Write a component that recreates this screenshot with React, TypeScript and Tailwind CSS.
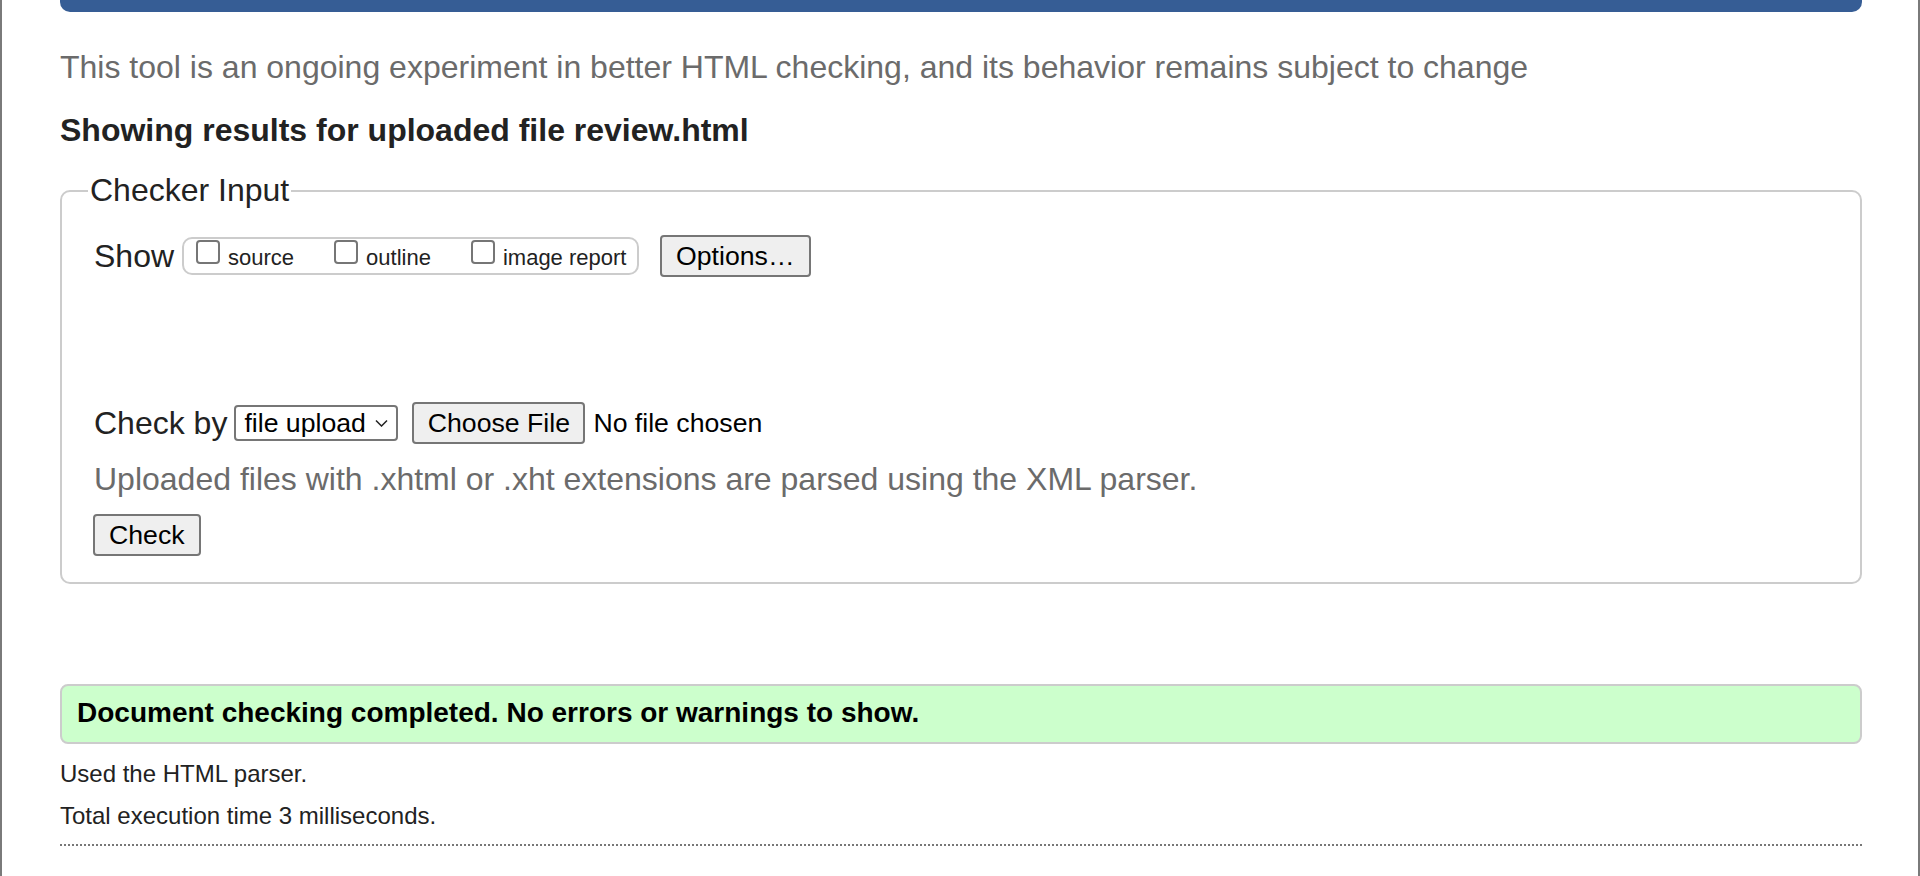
import React from 'react';

function Checkbox({ label }: { label: string }) {
  return (
    <label className="flex items-center gap-[8px]">
      <input
        type="checkbox"
        className="appearance-none w-[24px] h-[24px] rounded-[4px] border-2 border-[#767676] bg-white -translate-y-[4px]"
      />
      <span className="text-[22px] leading-[26px] text-[#222] translate-y-[2px]">{label}</span>
    </label>
  );
}

export default function App() {
  return (
    <div
      className="w-[1920px] min-h-[876px] bg-white border-x-2 border-[#7a7a7a] pl-[58px] pr-[56px] text-[#222]"
      style={{ fontFamily: '"Liberation Sans", Arial, sans-serif' }}
    >
      {/* header bar */}
      <div className="h-[12px] bg-[#365d95] rounded-b-[10px]" />

      <p className="mt-[37px] text-[32px] leading-[37px] text-[#6b6b6b]">
        This tool is an ongoing experiment in better HTML checking, and its behavior remains subject to change
      </p>

      <h2 className="mt-[26px] text-[32px] leading-[37px] font-bold text-[#222]">
        Showing results for uploaded file review.html
      </h2>

      <fieldset className="mt-[23px] border-2 border-[#ccc] rounded-[10px] pl-[32px] pb-[26px]">
        <legend className="ml-[-6px] px-[2px] text-[32px] leading-[37px] text-[#222]">Checker Input</legend>

        {/* show options */}
        <div className="mt-[26px] flex items-center">
          <span className="text-[32px] leading-[37px]">Show</span>
          <div className="ml-[8px] h-[38px] w-[457px] flex items-center gap-[40px] pl-[12px] border-2 border-[#ccc] rounded-[10px]">
            <Checkbox label="source" />
            <Checkbox label="outline" />
            <Checkbox label="image report" />
          </div>
          <button className="ml-[21px] h-[42px] px-[14px] bg-[#efefef] border-2 border-[#767676] rounded-[4px] text-[26.67px] leading-[30px] text-black">
            Options…
          </button>
        </div>

        {/* check by */}
        <div className="mt-[125px] flex items-center">
          <span className="text-[32px] leading-[37px]">Check by</span>
          <div className="relative ml-[7px]">
            <select className="appearance-none h-[36px] w-[164px] pl-[8px] bg-white border-2 border-[#767676] rounded-[4px] text-[26.67px] leading-[30px] text-black">
              <option>file upload</option>
            </select>
            <svg
              className="absolute right-[10px] top-[14px] w-[13px] h-[8px] pointer-events-none"
              viewBox="0 0 13 8"
              fill="none"
              stroke="#222"
              strokeWidth={1.5}
            >
              <path d="M1 1.5l5.5 5.5 5.5-5.5" />
            </svg>
          </div>
          <button className="ml-[14px] h-[42px] w-[173px] bg-[#efefef] border-2 border-[#767676] rounded-[4px] text-[26.67px] leading-[30px] text-black">
            Choose File
          </button>
          <span className="ml-[8px] text-[26.67px] leading-[30px] text-black">No file chosen</span>
        </div>

        <p className="mt-[17px] text-[32px] leading-[37px] text-[#6b6b6b]">
          Uploaded files with .xhtml or .xht extensions are parsed using the XML parser.
        </p>

        <button className="mt-[16px] -ml-[1px] h-[42px] px-[14px] bg-[#efefef] border-2 border-[#767676] rounded-[4px] text-[26.67px] leading-[30px] text-black">
          Check
        </button>
      </fieldset>

      {/* result */}
      <div className="mt-[100px] h-[60px] flex items-center pl-[15px] bg-[#ccffcc] border-2 border-[#cccccc] rounded-[8px]">
        <p className="text-[28px] leading-[32px] font-bold text-black -translate-y-[1px]">
          Document checking completed. No errors or warnings to show.
        </p>
      </div>

      <p className="mt-[16px] text-[24px] leading-[28px] text-[#222]">Used the HTML parser.</p>
      <p className="mt-[14px] text-[24px] leading-[28px] text-[#222]">Total execution time 3 milliseconds.</p>

      <div className="mt-[14px] border-t-2 border-dotted border-[#777]" />
    </div>
  );
}
